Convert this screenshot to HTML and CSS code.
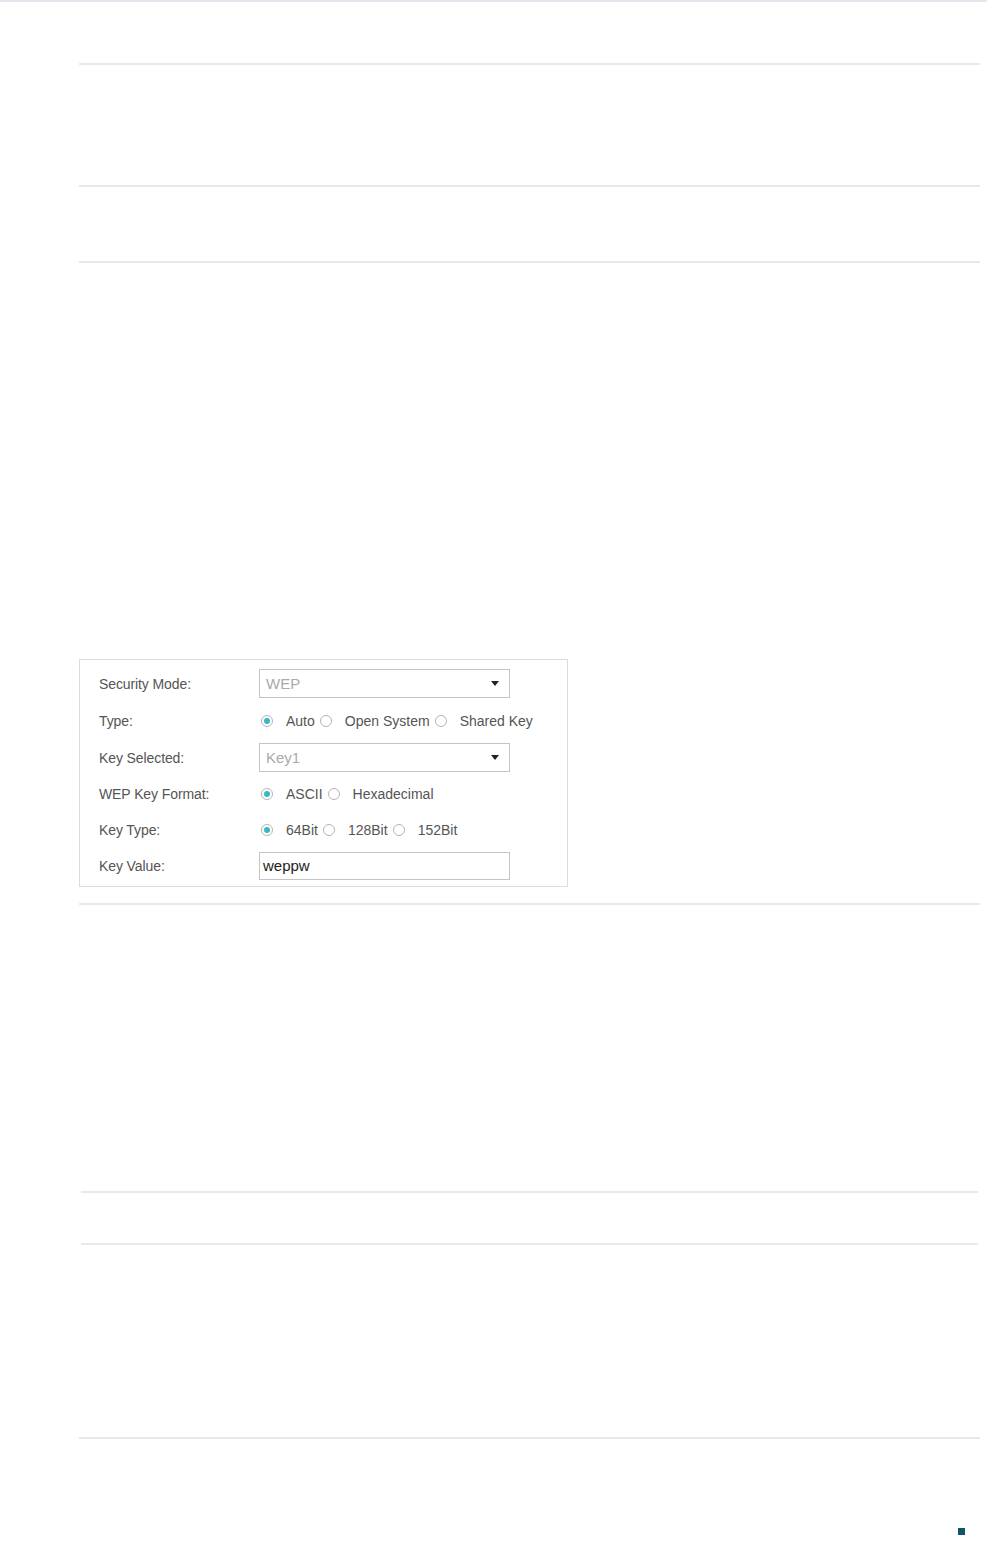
FILE: index.html
```html
<!DOCTYPE html>
<html lang="en">

<head>
    <meta charset="UTF-8">
    <meta name="viewport" content="width=device-width, initial-scale=1.0">
    <title>Wireless Security - WEP</title>
    <link rel="stylesheet" href="styles.css">
</head>

<body>
    <div class="top-rule"></div>

    <div class="doc">
        <div class="block h-62"></div>
        <div class="block h-120"></div>
        <div class="block h-74"></div>

        <div class="figure">
            <div class="panel">
                <div class="row">
                    <span class="label">Security Mode:</span>
                    <div class="select"><span>WEP</span><i class="caret"></i></div>
                </div>
                <div class="row">
                    <span class="label">Type:</span>
                    <div class="radios">
                        <span class="radio checked"></span><span class="opt">Auto</span>
                        <span class="radio"></span><span class="opt">Open System</span>
                        <span class="radio"></span><span class="opt">Shared Key</span>
                    </div>
                </div>
                <div class="row">
                    <span class="label">Key Selected:</span>
                    <div class="select"><span>Key1</span><i class="caret"></i></div>
                </div>
                <div class="row r-36">
                    <span class="label">WEP Key Format:</span>
                    <div class="radios">
                        <span class="radio checked"></span><span class="opt">ASCII</span>
                        <span class="radio"></span><span class="opt">Hexadecimal</span>
                    </div>
                </div>
                <div class="row r-35">
                    <span class="label">Key Type:</span>
                    <div class="radios">
                        <span class="radio checked"></span><span class="opt">64Bit</span>
                        <span class="radio"></span><span class="opt">128Bit</span>
                        <span class="radio"></span><span class="opt">152Bit</span>
                    </div>
                </div>
                <div class="row">
                    <span class="label">Key Value:</span>
                    <div class="text-input">weppw</div>
                </div>
            </div>
        </div>

        <div class="block h-287 inset"></div>
        <div class="block h-50 inset"></div>
        <div class="block h-192"></div>
    </div>

    <div class="page-foot">
        <span class="mark"></span>
    </div>
</body>

</html>
```

FILE: styles.css
```css
body {
    margin: 0;
    font-family: "Liberation Sans", Arial, sans-serif;
    background: #fff;
    color: #555;
}

.top-rule {
    height: 2px;
    background: #e3e8ee;
}

.doc {
    padding: 0 7px 0 79px;
}

.block {
    border-bottom: 2px solid #e6eaef;
}

.inset {
    margin: 0 2px 0 2px;
}

.h-62 {
    height: 61px;
}

.h-120 {
    height: 120px;
}

.h-74 {
    height: 74px;
}

.h-287 {
    height: 286px;
}

.h-50 {
    height: 50px;
}

.h-192 {
    height: 192px;
}

/* screenshot of the settings panel */
.figure {
    padding-top: 396px;
    padding-bottom: 16px;
    border-bottom: 2px solid #e6eaef;
}

.panel {
    border: 1px solid #dcdcdc;
    padding: 5px 0 2px 19px;
    width: 468px;
}

.row {
    display: flex;
    align-items: center;
    height: 37px;
    font-size: 14px;
}

.row.r-36 {
    height: 36px;
}

.row.r-35 {
    height: 35px;
}

.label {
    width: 160px;
    flex: none;
    color: #555;
    letter-spacing: -0.1px;
}

.select {
    position: relative;
    width: 243px;
    height: 27px;
    border: 1px solid #c4c4c4;
    display: flex;
    align-items: center;
    padding-left: 6px;
    color: #aaa;
    font-size: 15px;
}

.caret {
    position: absolute;
    right: 10px;
    top: 11px;
    width: 0;
    height: 0;
    border-left: 4px solid transparent;
    border-right: 4px solid transparent;
    border-top: 5px solid #222;
}

.radios {
    display: flex;
    align-items: center;
    color: #555;
}

.radio {
    width: 10px;
    height: 10px;
    border: 1px solid #b5b5b5;
    border-radius: 50%;
    margin: 0 13px 0 2px;
    position: relative;
    flex: none;
}

.opt + .radio {
    margin-left: 5px;
}

.radio.checked::after {
    content: "";
    position: absolute;
    left: 2px;
    top: 2px;
    width: 6px;
    height: 6px;
    border-radius: 50%;
    background: #3cb6c3;
}

.text-input {
    width: 246px;
    height: 26px;
    border: 1px solid #c4c4c4;
    display: flex;
    align-items: center;
    padding-left: 3px;
    color: #222;
    font-size: 15px;
}

.page-foot {
    display: flex;
    justify-content: flex-end;
    padding: 89px 22px 0 0;
}

.mark {
    width: 7px;
    height: 7px;
    background: #0d5766;
}
```
